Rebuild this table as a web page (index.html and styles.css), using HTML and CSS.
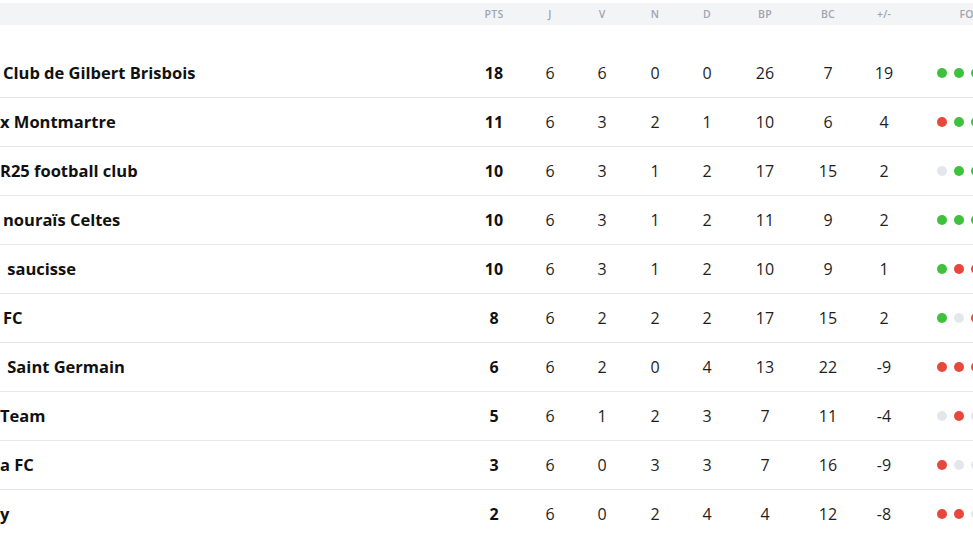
FILE: index.html
```html
<!DOCTYPE html>
<html lang="fr">
<head>
<meta charset="utf-8">
<title>Classement</title>
<link rel="stylesheet" href="styles.css">
</head>
<body>
<div class="viewport">
<table class="standings">
  <colgroup>
    <col class="c-name"><col class="c-pts"><col class="c-j"><col class="c-v"><col class="c-n"><col class="c-d"><col class="c-bp"><col class="c-bc"><col class="c-diff"><col class="c-form">
  </colgroup>
  <thead>
    <tr class="head">
      <th class="name"></th><th>PTS</th><th>J</th><th>V</th><th>N</th><th>D</th><th>BP</th><th>BC</th><th>+/-</th><th>FORME</th>
    </tr>
    <tr class="spacer"><td colspan="10"></td></tr>
  </thead>
  <tbody>
    <tr><td class="name">Club de Gilbert Brisbois</td><td class="pts">18</td><td>6</td><td>6</td><td>0</td><td>0</td><td>26</td><td>7</td><td>19</td><td class="form"><div class="dots"><span class="dot w"></span><span class="dot w"></span><span class="dot w"></span><span class="dot w"></span><span class="dot w"></span></div></td></tr>
    <tr><td class="name clip">x Montmartre</td><td class="pts">11</td><td>6</td><td>3</td><td>2</td><td>1</td><td>10</td><td>6</td><td>4</td><td class="form"><div class="dots"><span class="dot l"></span><span class="dot w"></span><span class="dot w"></span><span class="dot d"></span><span class="dot w"></span></div></td></tr>
    <tr><td class="name clip">R25 football club</td><td class="pts">10</td><td>6</td><td>3</td><td>1</td><td>2</td><td>17</td><td>15</td><td>2</td><td class="form"><div class="dots"><span class="dot d"></span><span class="dot w"></span><span class="dot w"></span><span class="dot l"></span><span class="dot w"></span></div></td></tr>
    <tr><td class="name">nouraïs Celtes</td><td class="pts">10</td><td>6</td><td>3</td><td>1</td><td>2</td><td>11</td><td>9</td><td>2</td><td class="form"><div class="dots"><span class="dot w"></span><span class="dot w"></span><span class="dot w"></span><span class="dot l"></span><span class="dot d"></span></div></td></tr>
    <tr><td class="name">&nbsp;saucisse</td><td class="pts">10</td><td>6</td><td>3</td><td>1</td><td>2</td><td>10</td><td>9</td><td>1</td><td class="form"><div class="dots"><span class="dot w"></span><span class="dot l"></span><span class="dot l"></span><span class="dot w"></span><span class="dot d"></span></div></td></tr>
    <tr><td class="name">FC</td><td class="pts">8</td><td>6</td><td>2</td><td>2</td><td>2</td><td>17</td><td>15</td><td>2</td><td class="form"><div class="dots"><span class="dot w"></span><span class="dot d"></span><span class="dot l"></span><span class="dot d"></span><span class="dot w"></span></div></td></tr>
    <tr><td class="name">&nbsp;Saint Germain</td><td class="pts">6</td><td>6</td><td>2</td><td>0</td><td>4</td><td>13</td><td>22</td><td>-9</td><td class="form"><div class="dots"><span class="dot l"></span><span class="dot l"></span><span class="dot l"></span><span class="dot w"></span><span class="dot w"></span></div></td></tr>
    <tr><td class="name clip">Team</td><td class="pts">5</td><td>6</td><td>1</td><td>2</td><td>3</td><td>7</td><td>11</td><td>-4</td><td class="form"><div class="dots"><span class="dot d"></span><span class="dot l"></span><span class="dot d"></span><span class="dot w"></span><span class="dot l"></span></div></td></tr>
    <tr><td class="name clip">a FC</td><td class="pts">3</td><td>6</td><td>0</td><td>3</td><td>3</td><td>7</td><td>16</td><td>-9</td><td class="form"><div class="dots"><span class="dot l"></span><span class="dot d"></span><span class="dot d"></span><span class="dot l"></span><span class="dot l"></span></div></td></tr>
    <tr><td class="name clip">y</td><td class="pts">2</td><td>6</td><td>0</td><td>2</td><td>4</td><td>4</td><td>12</td><td>-8</td><td class="form"><div class="dots"><span class="dot l"></span><span class="dot l"></span><span class="dot d"></span><span class="dot l"></span><span class="dot d"></span></div></td></tr>
  </tbody>
</table>
</div>
</body>
</html>
```

FILE: styles.css
```css
html, body {
  margin: 0;
  padding: 0;
  background: #ffffff;
}

body {
  font-family: "Open Sans", "Noto Sans", "Liberation Sans", sans-serif;
  color: #1c1c1c;
  overflow: hidden;
}

.viewport {
  width: 973px;
  height: 547px;
  overflow: hidden;
  padding-top: 3px;
  box-sizing: border-box;
}

.standings {
  border-collapse: collapse;
  table-layout: fixed;
  width: 1044px;
}

.c-name { width: 466px; }
.c-pts { width: 56px; }
.c-j { width: 56px; }
.c-v { width: 48px; }
.c-n { width: 58px; }
.c-d { width: 46px; }
.c-bp { width: 70px; }
.c-bc { width: 56px; }
.c-diff { width: 56px; }
.c-form { width: 132px; }

.head th {
  background: #f3f4f6;
  height: 22px;
  padding: 0;
  font-size: 10.5px;
  font-weight: 600;
  color: #9ea5b1;
  text-align: center;
  letter-spacing: 0.2px;
}

.spacer td {
  height: 24px;
  padding: 0;
}

tbody tr {
  border-bottom: 1px solid #e6e7ea;
}

tbody tr:last-child {
  border-bottom: none;
}

tbody td {
  height: 48px;
  padding: 0;
  text-align: center;
  font-size: 16px;
  line-height: 22px;
  font-weight: 400;
  color: #1e1e1e;
  white-space: nowrap;
}

tbody td.name {
  text-align: left;
  padding-left: 3px;
  font-size: 16.5px;
  font-weight: 700;
  color: #111111;
  overflow: hidden;
}

tbody td.name.clip {
  padding-left: 0;
}

tbody td.pts {
  font-weight: 700;
  color: #111111;
}

td.form {
  padding-left: 25px;
}

.dots {
  display: flex;
  align-items: center;
  gap: 7px;
}

.dot {
  flex: none;
  width: 10px;
  height: 10px;
  border-radius: 50%;
}

.dot.w { background: #3fc13e; }
.dot.l { background: #e8473b; }
.dot.d { background: #e3e6eb; }
```
